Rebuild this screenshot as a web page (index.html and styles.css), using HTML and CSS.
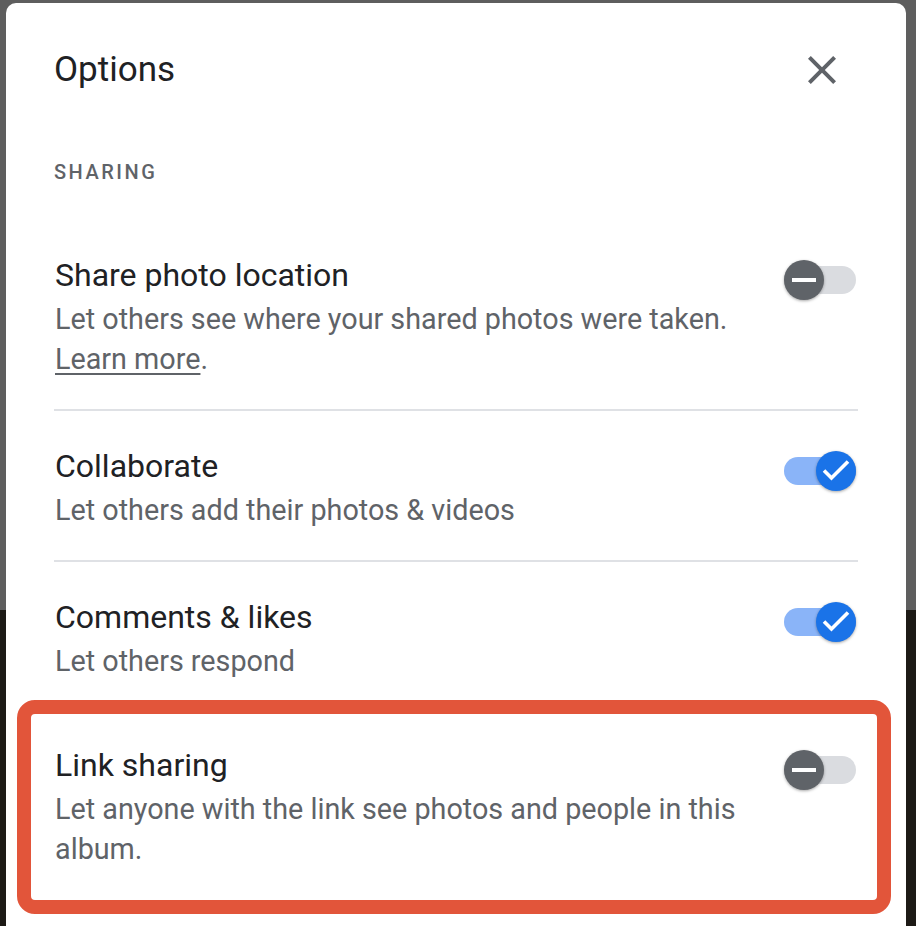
FILE: index.html
```html
<!DOCTYPE html>
<html lang="en">
<head>
<meta charset="utf-8">
<title>Options</title>
<link rel="stylesheet" href="styles.css">
</head>
<body>
<div class="dialog">
  <div class="header">
    <h1 class="dialog-title">Options</h1>
    <button class="close-btn" aria-label="Close">
      <svg width="48" height="48" viewBox="0 0 24 24"><path d="M19 6.41 17.59 5 12 10.59 6.41 5 5 6.41 10.59 12 5 17.59 6.41 19 12 13.41 17.59 19 19 17.59 13.41 12z" fill="#5f6368"/></svg>
    </button>
  </div>

  <div class="section-label">SHARING</div>

  <div class="row row-first">
    <div class="row-text">
      <div class="row-title">Share photo location</div>
      <div class="row-desc">Let others see where your shared photos were taken. <a class="link" href="#">Learn more</a>.</div>
    </div>
    <div class="toggle off"><span class="track"></span><span class="thumb"><svg width="40" height="40" viewBox="0 0 40 40"><rect x="8" y="18" width="24" height="4" fill="#fff"/></svg></span></div>
  </div>
  <div class="divider"></div>

  <div class="row">
    <div class="row-text">
      <div class="row-title">Collaborate</div>
      <div class="row-desc">Let others add their photos &amp; videos</div>
    </div>
    <div class="toggle on"><span class="track"></span><span class="thumb"><svg width="40" height="40" viewBox="0 0 40 40"><polyline points="8,19.5 15.5,27 32,10.5" fill="none" stroke="#fff" stroke-width="3.6"/></svg></span></div>
  </div>
  <div class="divider"></div>

  <div class="row row-last">
    <div class="row-text">
      <div class="row-title">Comments &amp; likes</div>
      <div class="row-desc">Let others respond</div>
    </div>
    <div class="toggle on"><span class="track"></span><span class="thumb"><svg width="40" height="40" viewBox="0 0 40 40"><polyline points="8,19.5 15.5,27 32,10.5" fill="none" stroke="#fff" stroke-width="3.6"/></svg></span></div>
  </div>

  <div class="row row-highlight">
    <div class="row-text">
      <div class="row-title">Link sharing</div>
      <div class="row-desc">Let anyone with the link see photos and people in this album.</div>
    </div>
    <div class="toggle off"><span class="track"></span><span class="thumb"><svg width="40" height="40" viewBox="0 0 40 40"><rect x="8" y="18" width="24" height="4" fill="#fff"/></svg></span></div>
  </div>
</div>
</body>
</html>
```

FILE: styles.css
```css
html, body {
  margin: 0;
  padding: 0;
  height: 100%;
  overflow: hidden;
}
body {
  background: linear-gradient(to bottom, #5e5e5e 0, #5e5e5e 610px, #1d1a16 610px, #1d1a16 100%);
  font-family: Roboto, "Liberation Sans", Arial, sans-serif;
}
.dialog {
  margin: 3px 10px 0 6px;
  background: #fff;
  border-radius: 10px 10px 0 0;
  padding: 43px 48px 40px 48px;
}
.header {
  display: flex;
  align-items: center;
  justify-content: space-between;
  height: 48px;
}
.dialog-title {
  margin: 0;
  font-size: 35px;
  font-weight: 400;
  color: #202124;
  line-height: 48px;
}
.close-btn {
  border: 0;
  background: none;
  padding: 0;
  margin-right: 12px;
  width: 48px;
  height: 48px;
  display: flex;
}
.section-label {
  margin-top: 66px;
  font-size: 20px;
  font-weight: 500;
  letter-spacing: 2.5px;
  color: #5f6368;
  line-height: 24px;
}
.row {
  display: flex;
  align-items: flex-start;
  justify-content: space-between;
  padding: 35px 0 30px 0;
}
.row-first {
  padding-top: 71px;
}
.row-text {
  flex: 1;
  padding-right: 30px;
}
.row-title {
  font-size: 32px;
  line-height: 40px;
  color: #202124;
  padding-left: 1px;
}
.row-desc {
  font-size: 28.75px;
  line-height: 40px;
  color: #5f6368;
  padding-left: 1px;
  margin-top: 4px;
}
.link {
  color: #5f6368;
  text-decoration: underline;
  text-underline-offset: 4px;
  text-decoration-thickness: 2px;
}
.divider {
  height: 2px;
  background: #dfe1e5;
}
.row-last {
  padding-bottom: 19px;
}
.row-highlight {
  margin: 0 -33px 0 -37px;
  border: 14px solid #e2553a;
  border-radius: 18px;
  padding: 31px 19px 31px 23px;
}
.toggle {
  position: relative;
  width: 72px;
  height: 40px;
  margin-top: 5px;
  margin-right: 2px;
  flex: none;
}
.track {
  position: absolute;
  left: 0;
  top: 6px;
  width: 72px;
  height: 28px;
  border-radius: 14px;
  background: #dadce0;
}
.thumb {
  position: absolute;
  top: 0;
  width: 40px;
  height: 40px;
  border-radius: 50%;
  box-shadow: 0 1px 3px rgba(0, 0, 0, 0.35);
  display: flex;
}
.off .thumb {
  left: 0;
  background: #5f6368;
}
.on .track {
  background: #8ab4f8;
}
.on .thumb {
  right: 0;
  background: #1a73e8;
}
```
